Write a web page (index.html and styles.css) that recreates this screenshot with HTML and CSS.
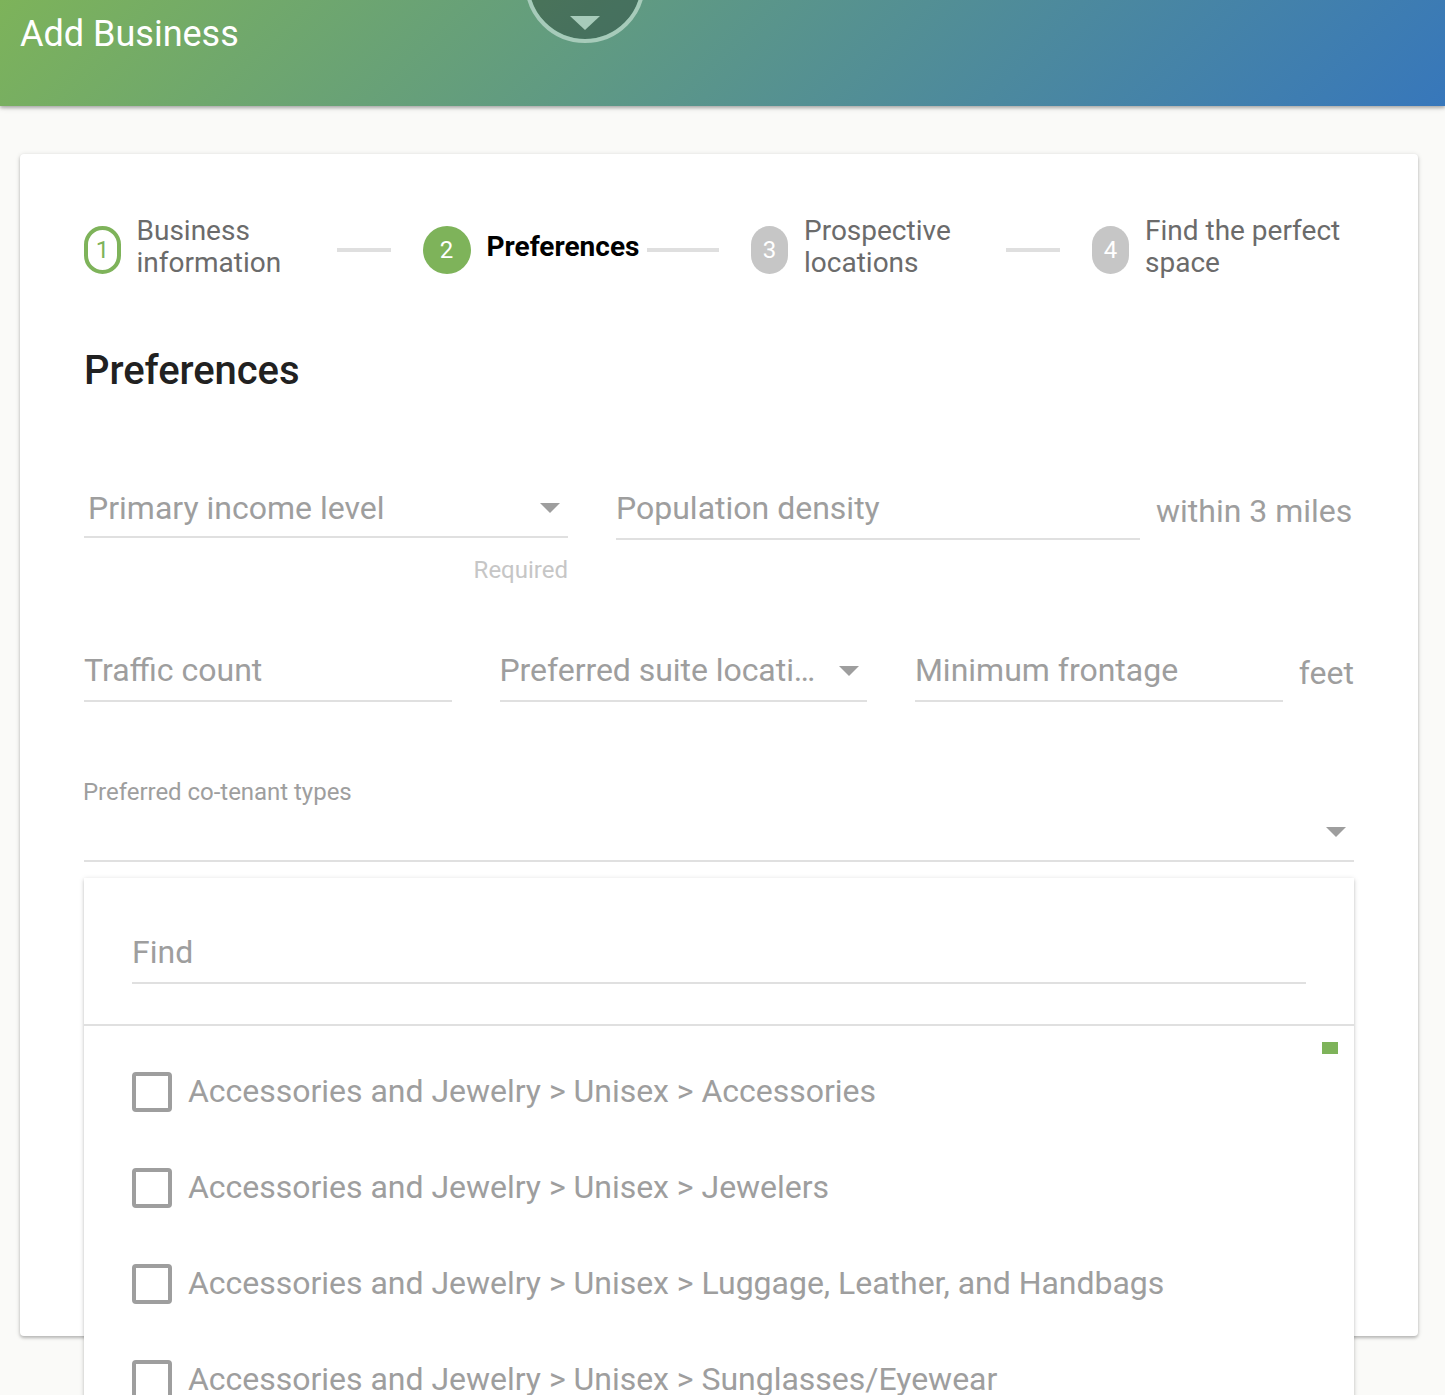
FILE: index.html
```html
<!DOCTYPE html>
<html lang="en">
<head>
<meta charset="utf-8">
<title>Add Business</title>
<link rel="stylesheet" href="styles.css">
</head>
<body>
<header class="toolbar">
  <h1 class="toolbar-title">Add Business</h1>
  <div class="pull-tab"><svg class="pull-arrow" width="30" height="14" viewBox="0 0 30 14"><path d="M0 0h30L15 14z"/></svg></div>
</header>
<main class="card">
  <ol class="steps">
    <li class="step">
      <span class="step-number done">1</span>
      <span class="step-label">Business information</span>
      <span class="connector"></span>
    </li>
    <li class="step active">
      <span class="step-number current">2</span>
      <span class="step-label">Preferences</span>
      <span class="connector"></span>
    </li>
    <li class="step">
      <span class="step-number">3</span>
      <span class="step-label wide">Prospective locations</span>
      <span class="connector"></span>
    </li>
    <li class="step">
      <span class="step-number">4</span>
      <span class="step-label">Find the perfect space</span>
    </li>
  </ol>
  <h2 class="section-title">Preferences</h2>
  <div class="row row-income">
    <div class="field-group">
      <div class="field select income"><span class="label">Primary income level</span><svg class="arrow" width="20" height="10" viewBox="0 0 20 10"><path d="M0 0h20L10 10z"/></svg></div>
      <div class="hint">Required</div>
    </div>
    <div class="field density"><span class="label">Population density</span></div>
    <span class="suffix">within 3 miles</span>
  </div>
  <div class="row row-traffic">
    <div class="field traffic"><span class="label">Traffic count</span></div>
    <div class="field select suite"><span class="label">Preferred suite locati…</span><svg class="arrow" width="20" height="10" viewBox="0 0 20 10"><path d="M0 0h20L10 10z"/></svg></div>
    <div class="field frontage"><span class="label">Minimum frontage</span></div>
    <span class="suffix">feet</span>
  </div>
  <div class="cotenant">
    <div class="floating-label">Preferred co-tenant types</div>
    <div class="cotenant-value"><svg class="arrow" width="20" height="10" viewBox="0 0 20 10"><path d="M0 0h20L10 10z"/></svg></div>
    <div class="menu">
      <div class="menu-search"><div class="field find"><span class="label">Find</span></div></div>
      <div class="scroll-thumb"></div>
      <ul class="options">
        <li class="option"><span class="checkbox"></span><span class="option-text">Accessories and Jewelry &gt; Unisex &gt; Accessories</span></li>
        <li class="option"><span class="checkbox"></span><span class="option-text">Accessories and Jewelry &gt; Unisex &gt; Jewelers</span></li>
        <li class="option"><span class="checkbox"></span><span class="option-text">Accessories and Jewelry &gt; Unisex &gt; Luggage, Leather, and Handbags</span></li>
        <li class="option"><span class="checkbox"></span><span class="option-text">Accessories and Jewelry &gt; Unisex &gt; Sunglasses/Eyewear</span></li>
      </ul>
    </div>
  </div>
</main>
</body>
</html>
```
FILE: styles.css
```css
* { box-sizing: border-box; }

body {
  margin: 0;
  height: 1395px;
  overflow: hidden;
  background: #fafaf8;
  color: #9e9e9e;
  font-family: Roboto, "Liberation Sans", sans-serif;
  font-size: 32px;
  line-height: 40px;
}

h1, h2, ol, ul { margin: 0; padding: 0; font-weight: 400; list-style: none; }

/* Toolbar */
.toolbar {
  position: relative;
  height: 106px;
  padding: 14px 20px;
  background: linear-gradient(135deg, #7db35a, #3777bb);
  box-shadow: 0 1px 6px rgba(0, 0, 0, .22), 0 2px 3px rgba(0, 0, 0, .2);
}
.toolbar-title { color: #fff; font-size: 36px; line-height: 40px; }
.pull-tab {
  position: absolute;
  left: 525px;
  top: -77px;
  width: 120px;
  height: 120px;
  border: 4px solid #a7cbba;
  border-radius: 50%;
  background: rgba(0, 0, 0, .27);
  background-clip: padding-box;
  display: flex;
  justify-content: center;
  align-items: flex-end;
  padding-bottom: 9px;
}
.pull-arrow { display: block; fill: #a7cbba; }

/* Card */
.card {
  width: 1398px;
  height: 1182px;
  margin: 48px 0 0 20px;
  padding: 60px 64px;
  background: #fff;
  border-radius: 4px;
  box-shadow: 0 1px 5px rgba(0, 0, 0, .16), 0 2px 3px rgba(0, 0, 0, .18);
}

/* Stepper */
.steps { display: grid; grid-template-columns: 339px 328px 341px 262px; height: 66px; }
.step { display: flex; align-items: flex-start; color: #6b6b6b; font-size: 28px; line-height: 32px; }
.step-number {
  flex: none;
  width: 37px;
  height: 48px;
  margin: 12px 16px 0 0;
  border-radius: 24px;
  background: #c6c6c6;
  color: #fff;
  font-size: 24px;
  line-height: 48px;
  text-align: center;
}
.step-number.done { margin-right: 15.5px; border: 4px solid #7eb35a; background: none; color: #7eb35a; line-height: 40px; }
.step-number.current { width: 48px; margin-right: 15.5px; padding-right: 1px; background: #7eb35a; }
.step-label { flex: none; width: 200.5px; padding-top: 1px; }
.step-label.wide { width: 202px; }
.active .step-label { width: 160.5px; padding-top: 17px; color: #000; font-weight: 700; }
.connector { flex: 1; height: 4px; margin: 34px 32px 0 0; background: #dfdfdf; }

.section-title { margin-top: 67px; color: #212121; font-size: 40px; line-height: 48px; font-weight: 500; letter-spacing: -.06px; }

/* Form fields */
.row { display: flex; align-items: flex-start; }
.row-income { height: 162px; margin-top: 93px; }
.row-traffic { height: 130px; }
.field { display: flex; align-items: flex-start; height: 52px; border-bottom: 2px solid #e0e0e0; }
.label { flex: 1; min-width: 0; white-space: nowrap; }
.arrow { flex: none; display: block; fill: #9e9e9e; }
.income { width: 484px; height: 50px; padding: 0 8px 0 4px; }
.income .arrow { margin-top: 15px; }
.density { width: 524px; margin-left: 48px; }
.traffic { width: 368px; }
.suite { width: 367px; margin-left: 48px; padding-right: 8px; }
.suite .label { margin: 0 20px 0 -.5px; letter-spacing: -.05px; }
.suite .arrow { margin-top: 16px; }
.frontage { width: 368px; margin-left: 48px; }
.suffix { padding-top: 3px; margin-left: 16px; }
.hint { margin-top: 16px; color: #c6c6c6; font-size: 24px; line-height: 32px; text-align: right; }

/* Co-tenant multi-select */
.cotenant { position: relative; height: 82px; border-bottom: 2px solid #e0e0e0; }
.floating-label { margin-left: -1px; font-size: 24px; line-height: 24px; letter-spacing: -.03px; }
.cotenant-value { display: flex; justify-content: flex-end; padding: 23px 8px 0 0; }
.menu {
  position: absolute;
  left: 0;
  top: 98px;
  width: 100%;
  height: 560px;
  background: #fff;
  box-shadow: 0 1px 5px rgba(0, 0, 0, .15), 0 2px 3px rgba(0, 0, 0, .13);
}
.menu-search { height: 148px; padding: 54px 48px 0; border-bottom: 2px solid #e0e0e0; }
.scroll-thumb { position: absolute; right: 16px; top: 164px; width: 16px; height: 12px; background: #7eb35a; }
.options { padding: 18px 48px; }
.option { display: flex; align-items: center; height: 96px; letter-spacing: -.02px; }
.option-text { padding-bottom: 2px; }
.checkbox { flex: none; width: 40px; height: 40px; margin-right: 16px; border: 4px solid #9e9e9e; border-radius: 4px; }
```
